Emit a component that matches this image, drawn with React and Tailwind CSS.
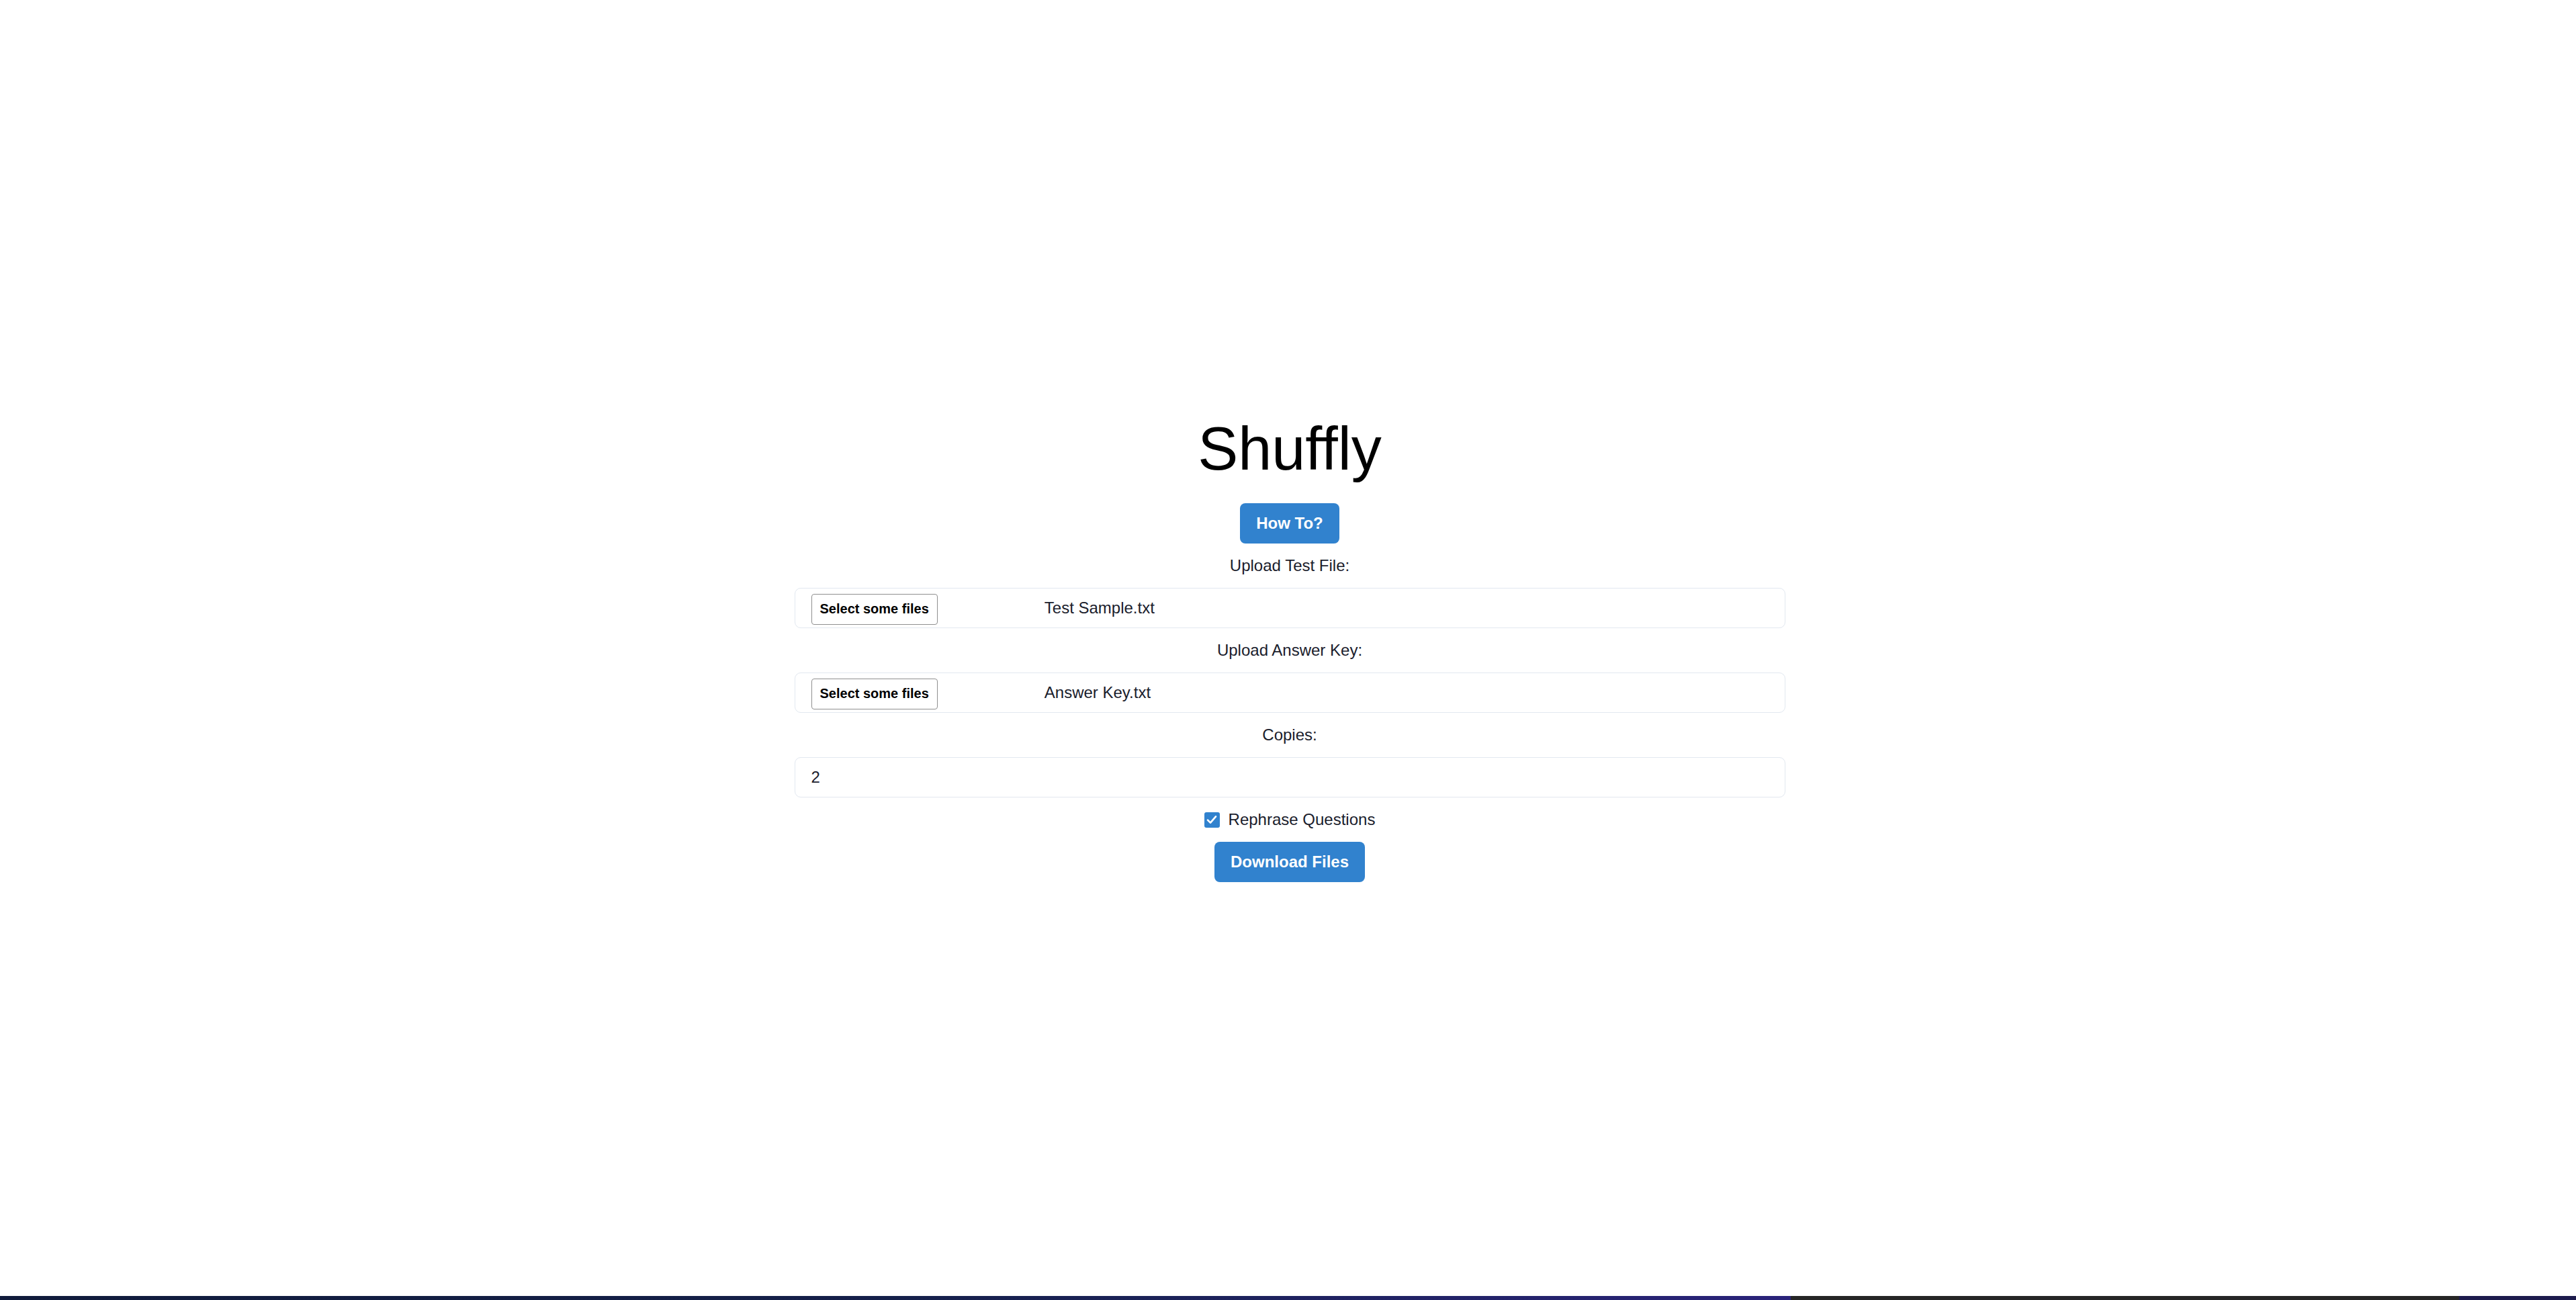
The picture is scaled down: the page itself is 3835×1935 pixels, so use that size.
import React, { useState } from "react";

function FileRow({ fileName }) {
  return (
    <div className="flex items-center w-[1475px] h-[60px] pl-[24px] border border-[#e2e8f0] rounded-[9px] bg-white">
      <button className="mt-[3px] h-[46px] px-[12px] border border-[#8f8f8f] rounded-[4px] bg-white text-[20px] leading-[23px] font-bold text-black">
        Select some files
      </button>
      <span className="ml-[159px] text-[24px] leading-[28px] text-[#1a202c]">{fileName}</span>
    </div>
  );
}

export default function App() {
  const [copies, setCopies] = useState("2");
  const [rephrase, setRephrase] = useState(true);

  return (
    <div className="flex flex-col h-[1935px] bg-white font-['Liberation_Sans',Arial,sans-serif]">
      <div className="flex-1 flex items-center justify-center pl-[5px]">
        <div className="flex flex-col items-center gap-[20px]">
          <h1 className="mb-[9px] text-[90px] leading-[104px] text-black">Shuffly</h1>

          <button className="h-[60px] px-[24px] rounded-[8px] bg-[#3182ce] text-white text-[24px] leading-[28px] font-bold">
            How To?
          </button>

          <label className="text-[24px] leading-[26px] text-[#1a202c]">Upload Test File:</label>
          <FileRow fileName="Test Sample.txt" />

          <label className="text-[24px] leading-[26px] text-[#1a202c]">Upload Answer Key:</label>
          <FileRow fileName="Answer Key.txt" />

          <label className="text-[24px] leading-[26px] text-[#1a202c]">Copies:</label>
          <input
            type="number"
            value={copies}
            onChange={(e) => setCopies(e.target.value)}
            className="w-[1475px] h-[60px] pl-[24px] border border-[#e2e8f0] rounded-[9px] text-[24px] text-[#1a202c] outline-none appearance-none [&::-webkit-inner-spin-button]:appearance-none"
          />

          <label
            className="flex items-center gap-[13px] h-[26px] cursor-pointer"
            onClick={() => setRephrase(!rephrase)}
          >
            <span className="flex items-center justify-center w-[23px] h-[23px] rounded-[3px] bg-[#3182ce]">
              {rephrase && (
                <svg viewBox="0 0 12 10" className="w-[16px] h-[14px]" fill="none">
                  <polyline points="1.5 5.5 4.5 8.5 10.5 1.5" stroke="white" strokeWidth="2" strokeLinecap="round" strokeLinejoin="round" />
                </svg>
              )}
            </span>
            <span className="text-[24px] leading-[26px] text-[#1a202c]">Rephrase Questions</span>
          </label>

          <button className="h-[60px] px-[24px] rounded-[8px] bg-[#3182ce] text-white text-[24px] leading-[28px] font-bold">
            Download Files
          </button>
        </div>
      </div>

      {/* bottom strip */}
      <div className="flex h-[6px]">
        <div className="w-[2666px] bg-linear-to-r from-[#101b3b] via-[#15204a] to-[#2a237a]" />
        <div className="w-[995px] bg-[#262626]" />
        <div className="flex-1 bg-[#1d1b4c]" />
      </div>
    </div>
  );
}
